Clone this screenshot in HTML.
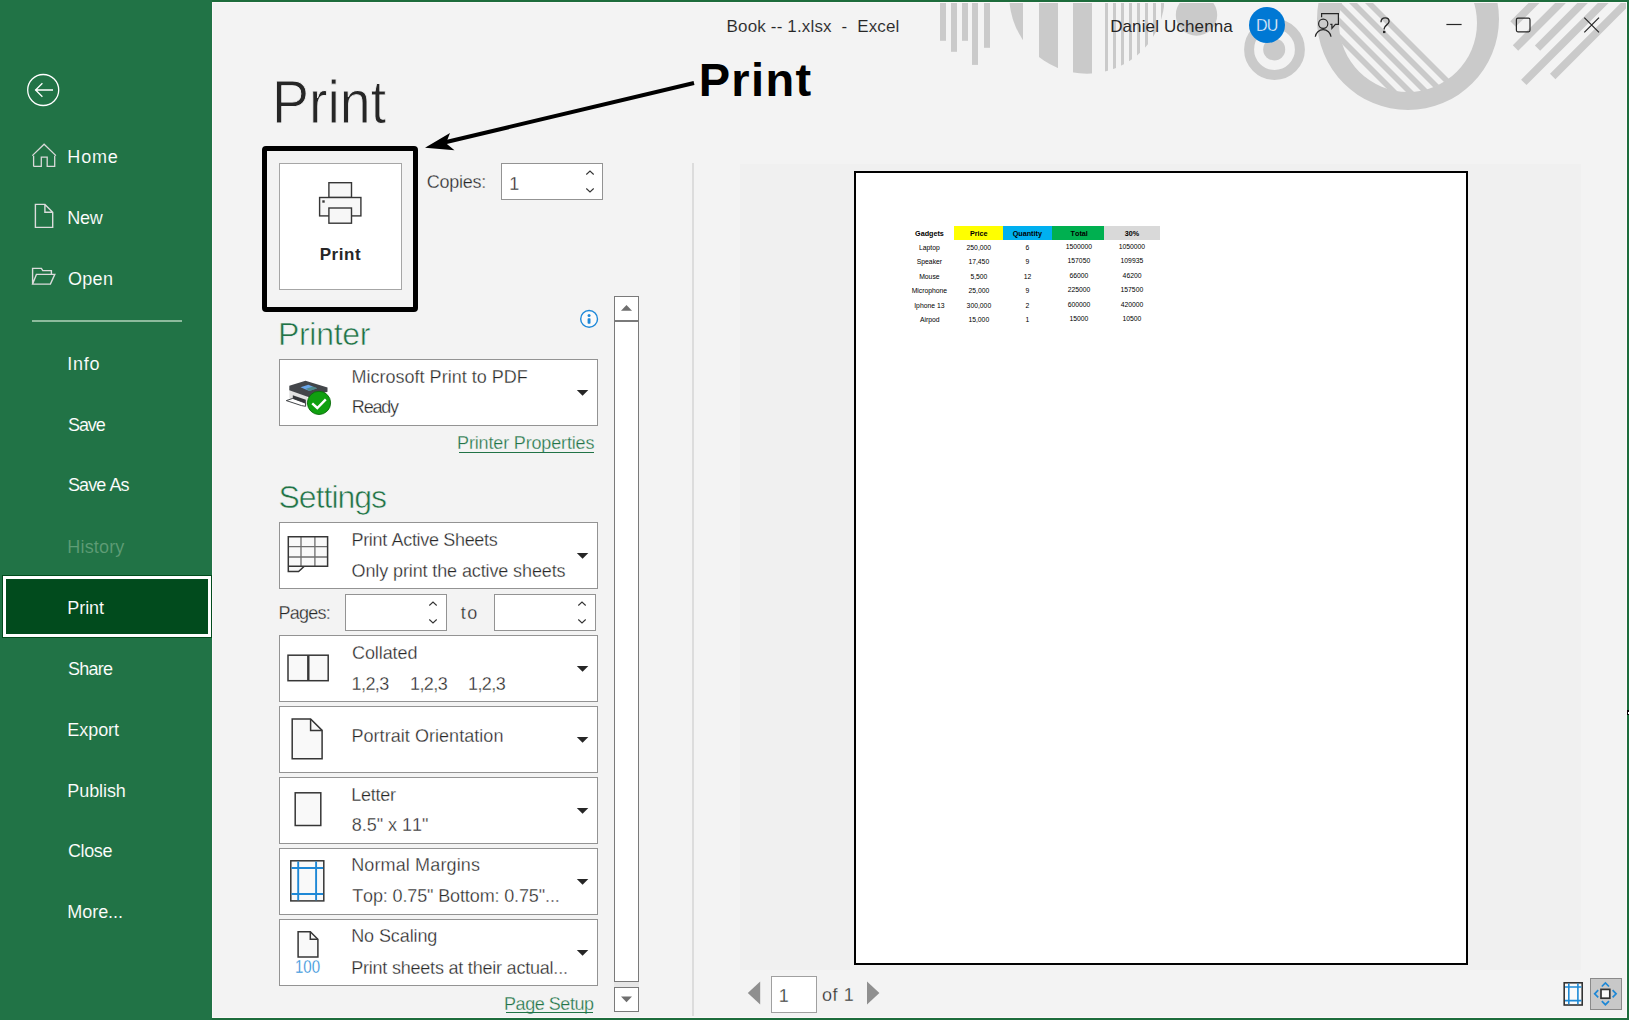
<!DOCTYPE html>
<html><head><meta charset="utf-8"><style>
html,body{margin:0;padding:0;}
body{width:1629px;height:1020px;position:relative;overflow:hidden;background:#f3f3f3;font-family:"Liberation Sans",sans-serif;font-kerning:none;}
.t{position:absolute;white-space:pre;font-family:"Liberation Sans",sans-serif;}
svg{position:absolute;overflow:visible;}
</style></head><body>
<div style="position:absolute;left:0px;top:0px;width:1629px;height:1020px;background:#f3f3f3"></div>
<div style="position:absolute;left:0px;top:0px;width:212px;height:1020px;background:#217346"></div>
<div style="position:absolute;left:212px;top:0px;width:1417px;height:2px;background:#1d6c3c"></div>
<div style="position:absolute;left:1627px;top:0px;width:2px;height:1020px;background:#1d6c3c"></div>
<div style="position:absolute;left:212px;top:1018px;width:1417px;height:2px;background:#1d6c3c"></div>
<svg style="left:0;top:0" width="212" height="320" viewBox="0 0 212 320"><circle cx="43.2" cy="90" r="15.5" fill="none" stroke="#fff" stroke-width="1.3"/><path d="M35 90H53M42.4 83.3L35.6 90L42.4 96.7" fill="none" stroke="#fff" stroke-width="1.3"/></svg>
<div style="position:absolute;left:32px;top:320px;width:150px;height:2px;background:#8dbb9d"></div>
<div style="position:absolute;left:2px;top:575px;width:210px;height:62.5px;background:#014b1d"></div>
<div style="position:absolute;left:3px;top:576px;width:208px;height:61px;box-sizing:border-box;border:3px solid #fff"></div>
<div class="t" style="left:67.36px;top:147.76px;font-size:18px;line-height:18px;color:#ffffff;font-weight:400;letter-spacing:0.827px;-webkit-text-stroke:0.1px #217346;">Home</div>
<div class="t" style="left:67.36px;top:208.76px;font-size:18px;line-height:18px;color:#ffffff;font-weight:400;letter-spacing:-0.330px;-webkit-text-stroke:0.1px #217346;">New</div>
<div class="t" style="left:67.99px;top:269.56px;font-size:18px;line-height:18px;color:#ffffff;font-weight:400;letter-spacing:0.290px;-webkit-text-stroke:0.1px #217346;">Open</div>
<div class="t" style="left:67.18px;top:354.56px;font-size:18px;line-height:18px;color:#ffffff;font-weight:400;letter-spacing:0.760px;-webkit-text-stroke:0.1px #217346;">Info</div>
<div class="t" style="left:67.99px;top:415.76px;font-size:18px;line-height:18px;color:#ffffff;font-weight:400;letter-spacing:-1.077px;-webkit-text-stroke:0.1px #217346;">Save</div>
<div class="t" style="left:67.99px;top:476.16px;font-size:18px;line-height:18px;color:#ffffff;font-weight:400;letter-spacing:-0.903px;-webkit-text-stroke:0.1px #217346;">Save As</div>
<div class="t" style="left:67.36px;top:537.76px;font-size:18px;line-height:18px;color:#5f9d76;font-weight:400;letter-spacing:0.160px;-webkit-text-stroke:0.1px #217346;">History</div>
<div class="t" style="left:67.36px;top:598.86px;font-size:18px;line-height:18px;color:#ffffff;font-weight:400;letter-spacing:-0.117px;-webkit-text-stroke:0.1px #014b1d;">Print</div>
<div class="t" style="left:67.99px;top:659.76px;font-size:18px;line-height:18px;color:#ffffff;font-weight:400;letter-spacing:-0.737px;-webkit-text-stroke:0.1px #217346;">Share</div>
<div class="t" style="left:67.36px;top:720.86px;font-size:18px;line-height:18px;color:#ffffff;font-weight:400;letter-spacing:-0.080px;-webkit-text-stroke:0.1px #217346;">Export</div>
<div class="t" style="left:67.36px;top:781.76px;font-size:18px;line-height:18px;color:#ffffff;font-weight:400;letter-spacing:-0.092px;-webkit-text-stroke:0.1px #217346;">Publish</div>
<div class="t" style="left:67.90px;top:842.16px;font-size:18px;line-height:18px;color:#ffffff;font-weight:400;letter-spacing:-0.372px;-webkit-text-stroke:0.1px #217346;">Close</div>
<div class="t" style="left:67.36px;top:902.96px;font-size:18px;line-height:18px;color:#ffffff;font-weight:400;letter-spacing:-0.068px;-webkit-text-stroke:0.1px #217346;">More...</div>
<svg style="left:0;top:0" width="1629" height="120" viewBox="0 0 1629 120"><rect x="940" y="0" width="6" height="40.8" fill="#cacaca"/><rect x="951" y="0" width="6" height="51.8" fill="#cacaca"/><rect x="962" y="0" width="6" height="40.8" fill="#cacaca"/><rect x="972" y="0" width="6" height="64.9" fill="#cacaca"/><rect x="984" y="0" width="6" height="47.8" fill="#cacaca"/><clipPath id="cp1"><circle cx="1087" cy="-4" r="77.7"/></clipPath><g clip-path="url(#cp1)"><rect x="1000" y="0" width="23" height="90" fill="#cacaca"/><rect x="1039" y="0" width="19" height="90" fill="#cacaca"/><rect x="1073" y="0" width="19" height="90" fill="#cacaca"/><rect x="1105" y="0" width="3" height="90" fill="#cacaca"/><rect x="1113" y="0" width="3" height="90" fill="#cacaca"/><rect x="1121" y="0" width="3" height="90" fill="#cacaca"/><rect x="1129" y="0" width="3" height="90" fill="#cacaca"/><rect x="1137" y="0" width="3" height="90" fill="#cacaca"/><rect x="1145" y="0" width="3" height="90" fill="#cacaca"/><rect x="1153" y="0" width="3" height="90" fill="#cacaca"/><rect x="1161" y="0" width="3" height="90" fill="#cacaca"/></g><circle cx="1196.5" cy="15" r="20.7" fill="#cacaca"/><circle cx="1274.5" cy="49.5" r="25.4" fill="none" stroke="#cacaca" stroke-width="10"/><circle cx="1274.2" cy="49.4" r="11" fill="#cacaca"/><path fill-rule="evenodd" fill="#cacaca" d="M1408 19m-91 0a91 91 0 1 0 182 0a91 91 0 1 0 -182 0ZM1408 23m-69 0a69 69 0 1 1 138 0a69 69 0 1 1 -138 0Z"/><clipPath id="cp2"><circle cx="1408" cy="23" r="69.5"/></clipPath><g clip-path="url(#cp2)"><polygon points="1298,0 1306,0 1506,200 1498,200" fill="#cacaca"/><polygon points="1314,0 1322,0 1522,200 1514,200" fill="#cacaca"/><polygon points="1330,0 1338,0 1538,200 1530,200" fill="#cacaca"/><polygon points="1346,0 1354,0 1554,200 1546,200" fill="#cacaca"/><polygon points="1362,0 1370,0 1570,200 1562,200" fill="#cacaca"/></g><polygon points="1510.3,21.3 1515.7,26.7 1635.7,-93.3 1630.3,-98.7" fill="#cacaca"/><polygon points="1512.8,45.3 1518.2,50.7 1638.2,-69.3 1632.8,-74.7" fill="#cacaca"/><polygon points="1534.9,45.4 1540.2,50.7 1660.2,-69.3 1654.9,-74.6" fill="#cacaca"/><polygon points="1521.1,79.7 1526.5,85.1 1646.5,-34.9 1641.1,-40.3" fill="#cacaca"/><polygon points="1550.0,73.8 1555.4,79.2 1675.4,-40.8 1670.0,-46.2" fill="#cacaca"/></svg>
<div style="position:absolute;left:212px;top:2px;width:1415px;height:1px;background:#fbf8f8"></div>
<div style="position:absolute;left:212px;top:2px;width:1px;height:1016px;background:#fbf8f8"></div>
<div style="position:absolute;left:1626px;top:2px;width:1px;height:1016px;background:#fbf8f8"></div>
<div style="position:absolute;left:212px;top:1017px;width:1415px;height:1px;background:#fbf8f8"></div>
<div style="position:absolute;left:212px;top:0px;width:1417px;height:2px;background:#1d6c3c"></div>
<div style="position:absolute;left:1627px;top:0px;width:2px;height:1020px;background:#1d6c3c"></div>
<div class="t" style="left:726.54px;top:18.31px;font-size:17px;line-height:17px;color:#262626;font-weight:400;letter-spacing:0.162px;-webkit-text-stroke:0.1px #f3f3f3;">Book -- 1.xlsx  -  Excel</div>
<div class="t" style="left:1110.14px;top:17.81px;font-size:17px;line-height:17px;color:#262626;font-weight:400;letter-spacing:0.128px;">Daniel Uchenna</div>
<svg style="left:1240px;top:0" width="60" height="50" viewBox="1240 0 60 50"><circle cx="1267" cy="25" r="18" fill="#0078d4"/></svg>
<div class="t" style="left:1255.92px;top:17.56px;font-size:16px;line-height:16px;color:#ffffff;font-weight:400;letter-spacing:-0.660px;-webkit-text-stroke:0.35px #0078d4;">DU</div>
<svg style="left:1300px;top:0" width="329" height="50" viewBox="1300 0 329 50"><circle cx="1323.2" cy="23.8" r="4.6" fill="none" stroke="#262626" stroke-width="1.2"/><path d="M1315.3 36.7A7.9 7.9 0 0 1 1331 36.7" fill="none" stroke="#262626" stroke-width="1.2"/><path d="M1321.6 17.2V13.6H1338.4V24.3H1335.4L1331.9 28.4V24.3H1330.3" fill="none" stroke="#262626" stroke-width="1.2"/><path d="M1446.4 24.5H1461.6" stroke="#262626" stroke-width="1.2"/><rect x="1516.4" y="18.2" width="13.6" height="13.6" rx="1.5" fill="none" stroke="#262626" stroke-width="1.2"/><path d="M1584.3 17.6L1599 32.3M1599 17.6L1584.3 32.3" stroke="#262626" stroke-width="1.2"/></svg>
<svg style="left:1370px;top:10px" width="30" height="30" viewBox="1370 10 30 30"><path d="M1381 22.3C1381 19.6 1382.9 17.9 1385.2 17.9C1387.5 17.9 1389.1 19.5 1389.1 21.6C1389.1 24.6 1384.2 25.2 1384.2 28.6V29.6" fill="none" stroke="#262626" stroke-width="1.35"/><rect x="1383" y="30.8" width="2.4" height="2.3" fill="#262626"/></svg>
<div class="t" style="left:272.46px;top:70.84px;font-size:61.5px;line-height:61.5px;color:#262626;font-weight:400;letter-spacing:0.000px;transform:scaleX(0.9028);transform-origin:0 0;-webkit-text-stroke:0.9px #f3f3f3;">Print</div>
<div style="position:absolute;left:279px;top:163px;width:123px;height:127px;background:#fff;box-sizing:border-box;border:1px solid #a6a6a6"></div>
<svg style="left:300px;top:170px" width="80" height="60" viewBox="300 170 80 60"><rect x="328.9" y="182.7" width="22.6" height="14.8" fill="#f7f7f7" stroke="#363636" stroke-width="1.4"/><rect x="319.6" y="197.5" width="41.3" height="18.4" fill="#f7f7f7" stroke="#363636" stroke-width="1.4"/><rect x="328.9" y="208" width="22.6" height="15.2" fill="#f7f7f7" stroke="#363636" stroke-width="1.4"/><rect x="322.3" y="200.3" width="2.4" height="2.4" fill="#3b3b3b"/></svg>
<div class="t" style="left:319.69px;top:245.61px;font-size:17px;line-height:17px;color:#262626;font-weight:700;letter-spacing:0.550px;">Print</div>
<div style="position:absolute;left:262.4px;top:146.2px;width:155.9px;height:165.4px;box-sizing:border-box;border:5.3px solid #000;border-radius:4px"></div>
<svg style="left:400px;top:50px" width="300" height="120" viewBox="400 50 300 120"><path d="M694 83L440 143.5" stroke="#000" stroke-width="4" fill="none"/><path d="M425 147.7L450 133L446 143.3L454.5 150.3Z" fill="#000"/></svg>
<div class="t" style="left:698.65px;top:56.41px;font-size:47px;line-height:47px;color:#000;font-weight:700;letter-spacing:1.350px;">Print</div>
<div class="t" style="left:426.70px;top:172.76px;font-size:18px;line-height:18px;color:#262626;font-weight:400;letter-spacing:-0.237px;-webkit-text-stroke:0.3px #f3f3f3;">Copies:</div>
<div style="position:absolute;left:501px;top:163px;width:102px;height:37px;background:#fff;box-sizing:border-box;border:1px solid #939393"></div>
<div class="t" style="left:509.35px;top:174.56px;font-size:18px;line-height:18px;color:#262626;font-weight:400;letter-spacing:0.000px;-webkit-text-stroke:0.3px #ffffff;">1</div>
<svg style="left:583.5px;top:168.8px" width="12" height="28" viewBox="583.5 168.8 12 28"><path d="M585.8 174.3L589.5 170.8L593.2 174.3" fill="none" stroke="#333" stroke-width="1.1"/><path d="M585.8 188.3L589.5 191.8L593.2 188.3" fill="none" stroke="#333" stroke-width="1.1"/></svg>
<div style="position:absolute;left:614px;top:296px;width:25px;height:686px;background:#fff;box-sizing:border-box;border:1px solid #7a7a7a"></div>
<div style="position:absolute;left:614px;top:320px;width:25px;height:2px;background:#7a7a7a"></div>
<svg style="left:614px;top:296px" width="25" height="30" viewBox="614 296 25 30"><path d="M621 310.8L626.5 305L632 310.8Z" fill="#6f6f6f"/></svg>
<div style="position:absolute;left:614px;top:982px;width:25px;height:5px;background:#e6e6e6"></div>
<div style="position:absolute;left:614px;top:987px;width:25px;height:25px;background:#fff;box-sizing:border-box;border:1px solid #7a7a7a"></div>
<svg style="left:614px;top:987px" width="25" height="25" viewBox="614 987 25 25"><path d="M621 996.5L626.5 1002.3L632 996.5Z" fill="#6f6f6f"/></svg>
<div style="position:absolute;left:692px;top:163px;width:2px;height:853px;background:#dcdcdc"></div>
<div class="t" style="left:277.94px;top:317.71px;font-size:32px;line-height:32px;color:#217346;font-weight:400;letter-spacing:-0.290px;-webkit-text-stroke:0.6px #f3f3f3;">Printer</div>
<svg style="left:575px;top:305px" width="30" height="30" viewBox="575 305 30 30"><circle cx="589.1" cy="318.9" r="8.4" fill="#fafafa" stroke="#1e88d8" stroke-width="1.4"/><circle cx="589.05" cy="315.6" r="1.5" fill="#1e88d8"/><rect x="587.6" y="318.2" width="2.9" height="5.5" rx="0.8" fill="#1e88d8"/></svg>
<div style="position:absolute;left:279px;top:359px;width:319px;height:67px;background:#fff;box-sizing:border-box;border:1px solid #939393"></div>
<svg style="left:570px;top:379px" width="25" height="25" viewBox="570 379 25 25"><path d="M576.8 389.9H588.3L582.55 395.8Z" fill="#262626"/></svg>
<div class="t" style="left:351.56px;top:367.76px;font-size:18px;line-height:18px;color:#262626;font-weight:400;letter-spacing:0.006px;-webkit-text-stroke:0.3px #ffffff;">Microsoft Print to PDF</div>
<div class="t" style="left:351.86px;top:398.46px;font-size:18px;line-height:18px;color:#262626;font-weight:400;letter-spacing:-1.197px;-webkit-text-stroke:0.3px #ffffff;">Ready</div>
<svg style="left:280px;top:370px" width="60" height="50" viewBox="280 370 60 50"><path d="M289.3 388.5V398.5L307 404.8V394.8Z" fill="#e2e2e2"/><path d="M292.8 395.3L305.8 399.8V405.5L292.8 400.8Z" fill="#34373a"/><path d="M289.3 385.8L305.5 380.8L327.5 387.4V391.8L309 397.2L289.3 390.2Z" fill="#43464a"/><path d="M300.5 387.3L308.3 384.8L317.2 388.2L309.4 390.9Z" fill="#6aa6e8"/><path d="M306 388.8L313 386.5L317.2 388.2L309.4 390.9Z" fill="#3f7a4e" opacity="0.6"/><path d="M286.3 400.6L292.8 398.4L305.6 403.2V406.3L301.5 405.6Z" fill="#fff" stroke="#2f3235" stroke-width="0.9"/><circle cx="319" cy="402.9" r="11.6" fill="#10a010" stroke="#0b6b0b" stroke-width="0.9"/><path d="M312.2 403.3L317.3 408L325.8 399.4" fill="none" stroke="#fff" stroke-width="2.4"/></svg>
<div class="t" style="left:457.06px;top:434.06px;font-size:18px;line-height:18px;color:#217346;font-weight:400;letter-spacing:-0.157px;-webkit-text-stroke:0.3px #f3f3f3;">Printer Properties</div>
<div style="position:absolute;left:458.5px;top:451.8px;width:135.3px;height:1.2px;background:#217346"></div>
<div class="t" style="left:278.56px;top:480.91px;font-size:32px;line-height:32px;color:#217346;font-weight:400;letter-spacing:-1.023px;-webkit-text-stroke:0.6px #f3f3f3;">Settings</div>
<div style="position:absolute;left:279px;top:522px;width:319px;height:67px;background:#fff;box-sizing:border-box;border:1px solid #939393"></div>
<svg style="left:570px;top:542px" width="25" height="25" viewBox="570 542 25 25"><path d="M576.8 552.9H588.3L582.55 558.8Z" fill="#262626"/></svg>
<div class="t" style="left:351.46px;top:530.96px;font-size:18px;line-height:18px;color:#262626;font-weight:400;letter-spacing:-0.324px;-webkit-text-stroke:0.3px #ffffff;">Print Active Sheets</div>
<div class="t" style="left:351.59px;top:561.66px;font-size:18px;line-height:18px;color:#262626;font-weight:400;letter-spacing:-0.116px;-webkit-text-stroke:0.3px #ffffff;">Only print the active sheets</div>
<svg style="left:284px;top:532px" width="50" height="45" viewBox="284 532 50 45"><path d="M288.3 536.8H327.6V566.2H304.3L298.6 571.6H288.3Z" fill="#f9f9f9"/><path d="M288.3 546.7H327.6M288.3 557H327.6M301 536.8V566.2M314.9 536.8V566.2" fill="none" stroke="#6e6e6e" stroke-width="1.3"/><path d="M288.3 536.8H327.6V566.2H304.3L298.6 571.6H288.3ZM288.3 566.2H304.3" fill="none" stroke="#363636" stroke-width="1.5"/></svg>
<div class="t" style="left:278.56px;top:603.96px;font-size:18px;line-height:18px;color:#262626;font-weight:400;letter-spacing:-0.786px;-webkit-text-stroke:0.3px #f3f3f3;">Pages:</div>
<div style="position:absolute;left:345px;top:594px;width:102px;height:37px;background:#fff;box-sizing:border-box;border:1px solid #939393"></div>
<svg style="left:427.2px;top:600px" width="12" height="28" viewBox="427.2 600 12 28"><path d="M429.5 605.5L433.2 602L436.9 605.5" fill="none" stroke="#333" stroke-width="1.1"/><path d="M429.5 619.5L433.2 623L436.9 619.5" fill="none" stroke="#333" stroke-width="1.1"/></svg>
<div class="t" style="left:460.73px;top:603.96px;font-size:18px;line-height:18px;color:#262626;font-weight:400;letter-spacing:1.560px;-webkit-text-stroke:0.3px #f3f3f3;">to</div>
<div style="position:absolute;left:494px;top:594px;width:102px;height:37px;background:#fff;box-sizing:border-box;border:1px solid #939393"></div>
<svg style="left:576.2px;top:600px" width="12" height="28" viewBox="576.2 600 12 28"><path d="M578.5 605.5L582.2 602L585.9000000000001 605.5" fill="none" stroke="#333" stroke-width="1.1"/><path d="M578.5 619.5L582.2 623L585.9000000000001 619.5" fill="none" stroke="#333" stroke-width="1.1"/></svg>
<div style="position:absolute;left:279px;top:635px;width:319px;height:67px;background:#fff;box-sizing:border-box;border:1px solid #939393"></div>
<svg style="left:570px;top:655px" width="25" height="25" viewBox="570 655 25 25"><path d="M576.8 665.9H588.3L582.55 671.8Z" fill="#262626"/></svg>
<div class="t" style="left:352.00px;top:643.56px;font-size:18px;line-height:18px;color:#262626;font-weight:400;letter-spacing:-0.087px;-webkit-text-stroke:0.3px #ffffff;">Collated</div>
<div class="t" style="left:351.55px;top:674.66px;font-size:18px;line-height:18px;color:#262626;font-weight:400;letter-spacing:-0.570px;-webkit-text-stroke:0.3px #ffffff;">1,2,3</div>
<div class="t" style="left:409.95px;top:674.66px;font-size:18px;line-height:18px;color:#262626;font-weight:400;letter-spacing:-0.570px;-webkit-text-stroke:0.3px #ffffff;">1,2,3</div>
<div class="t" style="left:467.95px;top:674.66px;font-size:18px;line-height:18px;color:#262626;font-weight:400;letter-spacing:-0.570px;-webkit-text-stroke:0.3px #ffffff;">1,2,3</div>
<svg style="left:284px;top:650px" width="50" height="35" viewBox="284 650 50 35"><rect x="288" y="655.2" width="40.2" height="25.5" fill="#f9f9f9" stroke="#363636" stroke-width="1.5"/><path d="M308.3 655.2V680.7" stroke="#363636" stroke-width="2.4"/></svg>
<div style="position:absolute;left:279px;top:706px;width:319px;height:67px;background:#fff;box-sizing:border-box;border:1px solid #939393"></div>
<svg style="left:570px;top:726px" width="25" height="25" viewBox="570 726 25 25"><path d="M576.8 736.9H588.3L582.55 742.8Z" fill="#262626"/></svg>
<div class="t" style="left:351.46px;top:727.46px;font-size:18px;line-height:18px;color:#262626;font-weight:400;letter-spacing:0.047px;-webkit-text-stroke:0.3px #ffffff;">Portrait Orientation</div>
<svg style="left:288px;top:715px" width="40" height="48" viewBox="288 715 40 48"><path d="M292.2 718.9H310.6L322.1 730.4V758.8H292.2Z" fill="#f9f9f9" stroke="#363636" stroke-width="1.5"/><path d="M310.6 718.9V730.4H322.1" fill="none" stroke="#363636" stroke-width="1.5"/></svg>
<div style="position:absolute;left:279px;top:777px;width:319px;height:67px;background:#fff;box-sizing:border-box;border:1px solid #939393"></div>
<svg style="left:570px;top:797px" width="25" height="25" viewBox="570 797 25 25"><path d="M576.8 807.9H588.3L582.55 813.8Z" fill="#262626"/></svg>
<div class="t" style="left:351.16px;top:786.16px;font-size:18px;line-height:18px;color:#262626;font-weight:400;letter-spacing:-0.216px;-webkit-text-stroke:0.3px #ffffff;">Letter</div>
<div class="t" style="left:351.79px;top:816.16px;font-size:18px;line-height:18px;color:#262626;font-weight:400;letter-spacing:-0.026px;-webkit-text-stroke:0.3px #ffffff;">8.5" x 11"</div>
<svg style="left:290px;top:788px" width="36" height="42" viewBox="290 788 36 42"><rect x="295.2" y="792.8" width="25.6" height="32.7" fill="#f9f9f9" stroke="#363636" stroke-width="1.5"/></svg>
<div style="position:absolute;left:279px;top:848px;width:319px;height:67px;background:#fff;box-sizing:border-box;border:1px solid #939393"></div>
<svg style="left:570px;top:868px" width="25" height="25" viewBox="570 868 25 25"><path d="M576.8 878.9H588.3L582.55 884.8Z" fill="#262626"/></svg>
<div class="t" style="left:351.16px;top:856.16px;font-size:18px;line-height:18px;color:#262626;font-weight:400;letter-spacing:0.137px;-webkit-text-stroke:0.3px #ffffff;">Normal Margins</div>
<div class="t" style="left:352.24px;top:887.36px;font-size:18px;line-height:18px;color:#262626;font-weight:400;letter-spacing:-0.130px;-webkit-text-stroke:0.3px #ffffff;">Top: 0.75" Bottom: 0.75"...</div>
<svg style="left:286px;top:856px" width="42" height="50" viewBox="286 856 42 50"><rect x="290.8" y="860.8" width="33" height="40.1" fill="#f9f9f9" stroke="#363636" stroke-width="1.5"/><path d="M291.5 868H323.1M291.5 894H323.1M298.2 861.5V900.2M316.1 861.5V900.2" fill="none" stroke="#1e88d6" stroke-width="1.9"/></svg>
<div style="position:absolute;left:279px;top:919px;width:319px;height:67px;background:#fff;box-sizing:border-box;border:1px solid #939393"></div>
<svg style="left:570px;top:939px" width="25" height="25" viewBox="570 939 25 25"><path d="M576.8 949.9H588.3L582.55 955.8Z" fill="#262626"/></svg>
<div class="t" style="left:351.16px;top:927.16px;font-size:18px;line-height:18px;color:#262626;font-weight:400;letter-spacing:-0.093px;-webkit-text-stroke:0.3px #ffffff;">No Scaling</div>
<div class="t" style="left:351.16px;top:958.56px;font-size:18px;line-height:18px;color:#262626;font-weight:400;letter-spacing:-0.211px;-webkit-text-stroke:0.3px #ffffff;">Print sheets at their actual...</div>
<svg style="left:290px;top:926px" width="36" height="36" viewBox="290 926 36 36"><path d="M298.1 931.7H310.3L317.9 939.2V957H298.1Z" fill="#f9f9f9" stroke="#363636" stroke-width="1.5"/><path d="M310.3 931.7V939.2H317.9" fill="none" stroke="#363636" stroke-width="1.5"/></svg>
<div class="t" style="left:294.67px;top:956.72px;font-size:19px;line-height:19px;color:#1e88d6;font-weight:400;letter-spacing:0.000px;transform:scaleX(0.7920);transform-origin:0 0;-webkit-text-stroke:0.3px #ffffff;">100</div>
<div class="t" style="left:504.06px;top:995.36px;font-size:18px;line-height:18px;color:#217346;font-weight:400;letter-spacing:-0.456px;-webkit-text-stroke:0.3px #f3f3f3;">Page Setup</div>
<div style="position:absolute;left:505.5px;top:1011.8px;width:87.7px;height:1.2px;background:#217346"></div>
<svg style="left:0;top:130px" width="70" height="170" viewBox="0 130 70 170"><path d="M33.6 166.4V155.8M54.7 155.8V166.4H47.2V157.2H41.3V166.4H33.6M32.3 155.6L44.1 144.2L55.9 155.6" fill="none" stroke="#d9d9d9" stroke-width="1.3"/><path d="M35.4 204.4H44.9L52.7 212.3V227.4H35.4Z M44.9 204.4V212.3H52.7" fill="none" stroke="#dcdcdc" stroke-width="1.4"/><path d="M32.6 284.1V268.4H41.4L42.8 270.6H51.4V274.3 M36.4 274.4H54.8L50.4 284.1H32.6Z" fill="none" stroke="#dcdcdc" stroke-width="1.4" stroke-linejoin="miter"/></svg>
<div style="position:absolute;left:740px;top:163.6px;width:841px;height:806.4px;background:#f0f0f0"></div>
<div style="position:absolute;left:854px;top:170.6px;width:613.7px;height:794px;background:#fff;box-sizing:border-box;border:2px solid #000"></div>
<div style="position:absolute;left:953.9px;top:226.2px;width:49px;height:13.7px;background:#ffff00"></div>
<div style="position:absolute;left:1002.9px;top:226.2px;width:49px;height:13.7px;background:#00b0f0"></div>
<div style="position:absolute;left:1051.9px;top:226.2px;width:52.1px;height:13.7px;background:#00b050"></div>
<div style="position:absolute;left:1104px;top:226.2px;width:55.8px;height:13.7px;background:#d9d9d9"></div>
<div class="t" style="left:915.10px;top:229.91px;font-size:7.2px;line-height:7.2px;color:#000;font-weight:700">Gadgets</div>
<div class="t" style="left:969.99px;top:229.91px;font-size:7.2px;line-height:7.2px;color:#000;font-weight:700">Price</div>
<div class="t" style="left:1012.76px;top:229.91px;font-size:7.2px;line-height:7.2px;color:#000;font-weight:700">Quantity</div>
<div class="t" style="left:1070.61px;top:229.91px;font-size:7.2px;line-height:7.2px;color:#000;font-weight:700">Total</div>
<div class="t" style="left:1124.80px;top:229.91px;font-size:7.2px;line-height:7.2px;color:#000;font-weight:700">30%</div>
<div class="t" style="left:918.98px;top:245.04px;font-size:6.8px;line-height:6.8px;color:#000;font-weight:400">Laptop</div>
<div class="t" style="left:966.57px;top:245.04px;font-size:6.8px;line-height:6.8px;color:#000;font-weight:400">250,000</div>
<div class="t" style="left:1025.58px;top:245.04px;font-size:6.8px;line-height:6.8px;color:#000;font-weight:400">6</div>
<div class="t" style="left:1065.65px;top:244.04px;font-size:6.8px;line-height:6.8px;color:#000;font-weight:400">1500000</div>
<div class="t" style="left:1118.65px;top:244.04px;font-size:6.8px;line-height:6.8px;color:#000;font-weight:400">1050000</div>
<div class="t" style="left:916.77px;top:259.04px;font-size:6.8px;line-height:6.8px;color:#000;font-weight:400">Speaker</div>
<div class="t" style="left:968.38px;top:259.04px;font-size:6.8px;line-height:6.8px;color:#000;font-weight:400">17,450</div>
<div class="t" style="left:1025.61px;top:259.04px;font-size:6.8px;line-height:6.8px;color:#000;font-weight:400">9</div>
<div class="t" style="left:1067.54px;top:258.04px;font-size:6.8px;line-height:6.8px;color:#000;font-weight:400">157050</div>
<div class="t" style="left:1120.56px;top:258.04px;font-size:6.8px;line-height:6.8px;color:#000;font-weight:400">109935</div>
<div class="t" style="left:919.18px;top:274.04px;font-size:6.8px;line-height:6.8px;color:#000;font-weight:400">Mouse</div>
<div class="t" style="left:970.38px;top:274.04px;font-size:6.8px;line-height:6.8px;color:#000;font-weight:400">5,500</div>
<div class="t" style="left:1023.64px;top:274.04px;font-size:6.8px;line-height:6.8px;color:#000;font-weight:400">12</div>
<div class="t" style="left:1069.51px;top:273.04px;font-size:6.8px;line-height:6.8px;color:#000;font-weight:400">66000</div>
<div class="t" style="left:1122.62px;top:273.04px;font-size:6.8px;line-height:6.8px;color:#000;font-weight:400">46200</div>
<div class="t" style="left:911.63px;top:288.04px;font-size:6.8px;line-height:6.8px;color:#000;font-weight:400">Microphone</div>
<div class="t" style="left:968.46px;top:288.04px;font-size:6.8px;line-height:6.8px;color:#000;font-weight:400">25,000</div>
<div class="t" style="left:1025.61px;top:288.04px;font-size:6.8px;line-height:6.8px;color:#000;font-weight:400">9</div>
<div class="t" style="left:1067.63px;top:287.04px;font-size:6.8px;line-height:6.8px;color:#000;font-weight:400">225000</div>
<div class="t" style="left:1120.54px;top:287.04px;font-size:6.8px;line-height:6.8px;color:#000;font-weight:400">157500</div>
<div class="t" style="left:914.22px;top:303.04px;font-size:6.8px;line-height:6.8px;color:#000;font-weight:400">Iphone 13</div>
<div class="t" style="left:966.61px;top:303.04px;font-size:6.8px;line-height:6.8px;color:#000;font-weight:400">300,000</div>
<div class="t" style="left:1025.61px;top:303.04px;font-size:6.8px;line-height:6.8px;color:#000;font-weight:400">2</div>
<div class="t" style="left:1067.63px;top:302.04px;font-size:6.8px;line-height:6.8px;color:#000;font-weight:400">600000</div>
<div class="t" style="left:1120.73px;top:302.04px;font-size:6.8px;line-height:6.8px;color:#000;font-weight:400">420000</div>
<div class="t" style="left:919.91px;top:317.04px;font-size:6.8px;line-height:6.8px;color:#000;font-weight:400">Airpod</div>
<div class="t" style="left:968.38px;top:317.04px;font-size:6.8px;line-height:6.8px;color:#000;font-weight:400">15,000</div>
<div class="t" style="left:1025.51px;top:317.04px;font-size:6.8px;line-height:6.8px;color:#000;font-weight:400">1</div>
<div class="t" style="left:1069.43px;top:316.04px;font-size:6.8px;line-height:6.8px;color:#000;font-weight:400">15000</div>
<div class="t" style="left:1122.43px;top:316.04px;font-size:6.8px;line-height:6.8px;color:#000;font-weight:400">10500</div>
<svg style="left:740px;top:970px" width="150" height="45" viewBox="740 970 150 45"><path d="M760.2 981.6V1004.4L747.8 993Z" fill="#8f8f8f"/><path d="M867 981.6V1004.4L879.4 993Z" fill="#8f8f8f"/></svg>
<div style="position:absolute;left:771px;top:976px;width:46px;height:36.7px;background:#fff;box-sizing:border-box;border:1px solid #a0a0a0"></div>
<div class="t" style="left:778.85px;top:987.26px;font-size:18px;line-height:18px;color:#262626;font-weight:400;letter-spacing:0.000px;-webkit-text-stroke:0.3px #ffffff;">1</div>
<div class="t" style="left:822.08px;top:985.66px;font-size:18px;line-height:18px;color:#262626;font-weight:400;letter-spacing:0.523px;-webkit-text-stroke:0.3px #f3f3f3;">of 1</div>
<div style="position:absolute;left:1590px;top:978px;width:31.8px;height:31.7px;background:#c8c8c8;box-sizing:border-box;border:1px solid #8a8a8a"></div>
<svg style="left:1555px;top:975px" width="70" height="40" viewBox="1555 975 70 40"><rect x="1564.2" y="982.8" width="18" height="22.2" fill="#fafafa" stroke="#333" stroke-width="1.6"/><path d="M1565 987H1581.4M1565 1000.6H1581.4M1568.8 983.6V1004.2M1577.9 983.6V1004.2" stroke="#1e8ad6" stroke-width="1.6"/><rect x="1601" y="989.4" width="8.8" height="8.8" fill="#fafafa" stroke="#333" stroke-width="1.7"/><path d="M1601.8 986.5L1605.4 983L1609 986.5M1601.8 1001.2L1605.4 1004.7L1609 1001.2M1598.2 990.2L1594.7 993.8L1598.2 997.4M1612.6 990.2L1616.1 993.8L1612.6 997.4" fill="none" stroke="#1e88d6" stroke-width="1.7"/></svg>
<div style="position:absolute;left:1627px;top:710px;width:2px;height:5px;background:#000"></div>
<div style="position:absolute;left:1628px;top:711.5px;width:1px;height:2px;background:#fff"></div>
</body></html>
